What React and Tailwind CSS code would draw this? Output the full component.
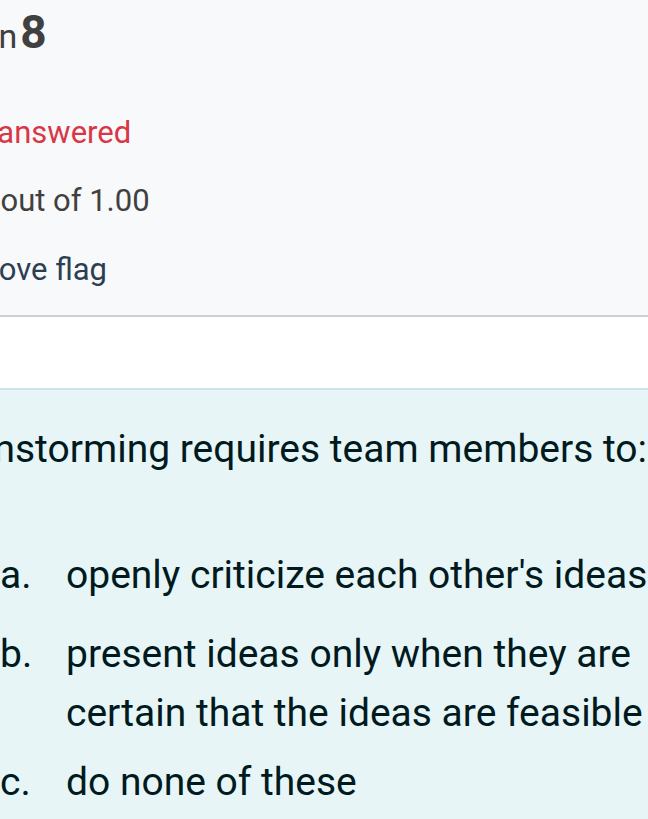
import React from 'react';

const font = { fontFamily: 'Roboto, "Noto Sans", sans-serif' };

const answers = [
    { key: 'a.', text: "openly criticize each other's ideas", mt: 'mt-[72px]' },
    { key: 'b.', text: 'present ideas only when they are certain that the ideas are feasible', mt: 'mt-[20px]' },
    { key: 'c.', text: 'do none of these', mt: 'mt-[10px]' },
];

const App = () => {
    return (
        <div className="w-[648px] h-[819px] overflow-hidden bg-white" style={font}>
            {/* question info */}
            <div className="h-[317px] bg-[#f8f9fa] border-b-2 border-[#cbd0d5]">
                <div className="pt-[2px] h-[64px] leading-[60px] whitespace-nowrap -ml-[118px] text-[#404040]">
                    <span className="text-[34px]">Question</span>
                    <span className="text-[46px] font-bold ml-[3px]">8</span>
                </div>
                <div className="mt-[49px] h-[40px] leading-[40px] text-[31px] whitespace-nowrap -ml-[109px] text-[#d93646]">
                    Not yet answered
                </div>
                <div className="mt-[28px] h-[40px] leading-[40px] text-[31px] whitespace-nowrap -ml-[111px] text-[#404040]">
                    Marked out of 1.00
                </div>
                <div className="mt-[29px] h-[40px] leading-[40px] text-[31px] whitespace-nowrap -ml-[64px] text-[#2c3e52]">
                    Remove flag
                </div>
            </div>

            <div className="h-[71px]" />

            {/* formulation */}
            <div className="h-[431px] bg-[#e7f5f7] border-t-2 border-[#cde4e9] text-[#001a1e]">
                <div className="pt-[34px] h-[84px] leading-[50px] text-[39px] whitespace-nowrap -ml-[74px]">
                    Brainstorming requires team members to:
                </div>
                {answers.map((a) => (
                    <div key={a.key} className={`${a.mt} flex text-[39px] leading-[59px]`}>
                        <span className="w-[66px] shrink-0">{a.key}</span>
                        <span className="w-[600px] shrink-0">{a.text}</span>
                    </div>
                ))}
            </div>
        </div>
    );
};

export default App;
